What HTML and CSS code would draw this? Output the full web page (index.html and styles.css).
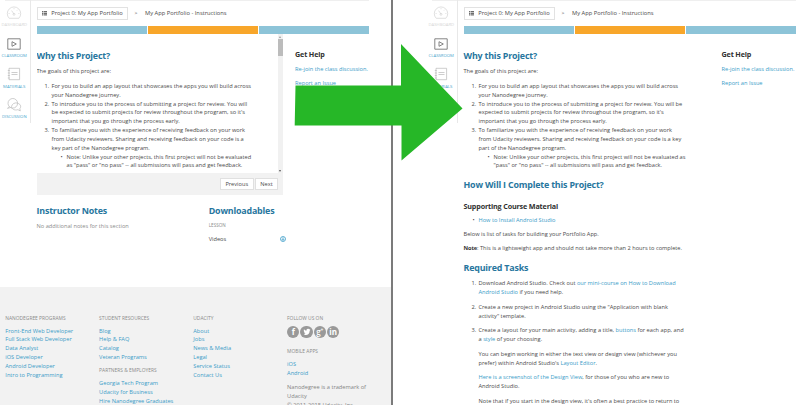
FILE: index.html
```html
<!DOCTYPE html>
<html lang="en">
<head>
<meta charset="utf-8">
<title>My App Portfolio - Instructions</title>
<link rel="stylesheet" href="styles.css">
</head>
<body>
<svg width="0" height="0" class="defs" aria-hidden="true">
  <symbol id="gauge" viewBox="0 0 16 14"><path d="M3.2 12.3A6.7 6.7 0 1 1 12.8 12.3Z"/><path d="M8 8L5.6 4.6M2.6 7.5h1M12.4 7.5h1M8 2.2v1M11.7 3.8l-.7.7"/><circle cx="8" cy="8.3" r="1"/></symbol>
  <symbol id="play" viewBox="0 0 16 14"><path d="M1.8 1.8h12.4v10.4H1.8z"/><path d="M6 4.7v4.6L10.3 7z"/></symbol>
  <symbol id="book" viewBox="0 0 16 14"><path d="M3 1.3h10.6v11.4H3zM5.500 5.500h6M5.500 7.500h6M1.8 3.5h2M1.8 6h2M1.8 8.5h2M1.8 11h2"/></symbol>
  <symbol id="chat" viewBox="0 0 16 14"><circle cx="6.800" cy="5.300" r="4.800"/><path d="M3.2 8.500L1.5 10.4 4.500 9.500"/><path d="M11.500 5.200c4 1 3.500 4.600 2.300 5.400l.5 2.300-2.400-1.200c-3.500 1-6.200-.7-6.400-3 .5-3 3-4.200 6-3.700"/></symbol>
  <symbol id="list" viewBox="0 0 5 5"><path d="M0 .7h1M1.500 .7h3.500M0 2.300h1M1.500 2.300h3.500M0 3.900h1M1.500 3.900h3.500"/></symbol>
</svg>
<div class="screen">
  <section class="pane before">
    <div class="top">
      <nav class="side">
        <a class="dim"><svg><use href="#gauge"/></svg>DASHBOARD</a>
        <a class="on"><svg><use href="#play"/></svg>CLASSROOM</a>
        <a><svg><use href="#book"/></svg>MATERIALS</a>
        <a><svg><use href="#chat"/></svg>DISCUSSION</a>
      </nav>
      <main>
        <div class="crumbs"><span class="crumb"><svg><use href="#list"/></svg>Project 0: My App Portfolio</span><i>&gt;</i><span>My App Portfolio - Instructions</span></div>
        <div class="progress"><b></b><b class="now"></b><b></b></div>
        <div class="cols">
          <div class="lesson">
            <div class="scroll">
              <article>
                <h2>Why this Project?</h2>
                <p>The goals of this project are:</p>
                <ol>
                  <li>For you to build an app layout that showcases the apps you will build across<br>your Nanodegree journey.</li>
                  <li>To introduce you to the process of submitting a project for review. You will<br>be expected to submit projects for review throughout the program, so it's<br>important that you go through the process early.</li>
                  <li>To familiarize you with the experience of receiving feedback on your work<br>from Udacity reviewers. Sharing and receiving feedback on your code is a<br>key part of the Nanodegree program.
                    <ul><li>Note: Unlike your other projects, this first project will not be evaluated<br>as "pass" or "no pass" -- all submissions will pass and get feedback.</li></ul>
                  </li>
                </ol>
              </article>
              <div class="bar"><s class="up"></s><b></b><s class="down"></s></div>
            </div>
            <div class="pager"><button>Previous</button><button>Next</button></div>
          </div>
          <aside><h3>Get Help</h3><a>Re-join the class discussion.</a><a>Report an Issue</a></aside>
        </div>
        <div class="extras">
          <div class="notes"><h2>Instructor Notes</h2><p>No additional notes for this section</p></div>
          <div class="downloads"><h2>Downloadables</h2><h6>LESSON</h6><p>Videos <svg viewBox="0 0 6 6"><circle cx="3" cy="3" r="2.500"/><path d="M3 1.300v3M1.900 3.200L3 4.400l1.100-1.200"/></svg></p></div>
        </div>
      </main>
    </div>
    <footer>
      <div><h6>NANODEGREE PROGRAMS</h6><a>Front-End Web Developer</a><a>Full Stack Web Developer</a><a>Data Analyst</a><a>iOS Developer</a><a>Android Developer</a><a>Intro to Programming</a></div>
      <div><h6>STUDENT RESOURCES</h6><a>Blog</a><a>Help &amp; FAQ</a><a>Catalog</a><a>Veteran Programs</a><h6 class="next">PARTNERS &amp; EMPLOYERS</h6><a>Georgia Tech Program</a><a>Udacity for Business</a><a>Hire Nanodegree Graduates</a></div>
      <div><h6>UDACITY</h6><a>About</a><a>Jobs</a><a>News &amp; Media</a><a>Legal</a><a>Service Status</a><a>Contact Us</a></div>
      <div><h6>FOLLOW US ON</h6>
        <div class="social"><span>f</span><span><svg viewBox="0 0 12 12"><path d="M2.700 8.500c2.800 1.500 6-.1 6-3.800l.8-1-.9.100.5-.9-1 .4c-1.300-1.100-2.900-.1-2.500 1.300C4.300 4.500 3.600 3.900 3 3.200c-.5.900-.2 1.700.4 2.200L2.800 5.200c.1.900.6 1.400 1.200 1.600l-.6.100c.3.600.8.800 1.300.9-.6.500-1.200.700-2 .700z"/></svg></span><span class="g">g<sup>+</sup></span><span>in</span></div>
        <h6 class="apps">MOBILE APPS</h6><a>iOS</a><a>Android</a><p>Nanodegree is a trademark of<br>Udacity<br>© 2011-2015 Udacity, Inc.</p></div>
    </footer>
  </section>
  <section class="pane after">
    <div class="top">
      <nav class="side">
        <a class="dim"><svg><use href="#gauge"/></svg>DASHBOARD</a>
        <a class="on"><svg><use href="#play"/></svg>CLASSROOM</a>
        <a><svg><use href="#book"/></svg>MATERIALS</a>
      </nav>
      <main>
        <div class="crumbs"><span class="crumb"><svg><use href="#list"/></svg>Project 0: My App Portfolio</span><i>&gt;</i><span>My App Portfolio - Instructions</span></div>
        <div class="progress"><b></b><b class="now"></b><b></b></div>
        <div class="cols">
          <article>
            <h2>Why this Project?</h2>
            <p>The goals of this project are:</p>
            <ol>
              <li>For you to build an app layout that showcases the apps you will build across<br>your Nanodegree journey.</li>
              <li>To introduce you to the process of submitting a project for review. You will be<br>expected to submit projects for review throughout the program, so it's<br>important that you go through the process early.</li>
              <li>To familiarize you with the experience of receiving feedback on your work<br>from Udacity reviewers. Sharing and receiving feedback on your code is a key<br>part of the Nanodegree program.
                <ul><li>Note: Unlike your other projects, this first project will not be evaluated as<br>"pass" or "no pass" -- all submissions will pass and get feedback.</li></ul>
              </li>
            </ol>
            <h2 class="how">How Will I Complete this Project?</h2>
            <h3>Supporting Course Material</h3>
            <ul class="links"><li><a>How to Install Android Studio</a></li></ul>
            <p class="below">Below is list of tasks for building your Portfolio App.</p>
            <p><strong>Note</strong>: This is a lightweight app and should not take more than 2 hours to complete.</p>
            <h2 class="required">Required Tasks</h2>
            <ol class="tasks">
              <li>Download Android Studio. Check out <a>our mini-course on How to Download<br>Android Studio</a> if you need help.</li>
              <li>Create a new project in Android Studio using the "Application with blank<br>activity" template.</li>
              <li>Create a layout for your main activity, adding a title, <a>buttons</a> for each app, and<br>a <a>style</a> of your choosing.
                <p>You can begin working in either the text view or design view (whichever you<br>prefer) within Android Studio's <a>Layout Editor</a>.</p>
                <p><a>Here is a screenshot of the Design View</a>, for those of you who are new to<br>Android Studio.</p>
                <p>Note that if you start in the design view, it's often a best practice to return to</p>
              </li>
            </ol>
          </article>
          <aside><h3>Get Help</h3><a>Re-join the class discussion.</a><a>Report an Issue</a></aside>
        </div>
      </main>
    </div>
  </section>
  <svg class="arrow" viewBox="0 0 170 118"><path d="M1.500 41.500H107V0L168.500 64.500 107.500 116.500V81.500H.700z"/></svg>
</div>
</body>
</html>
```
FILE: styles.css
```css
* { box-sizing: border-box; }
body { margin: 0; background: #fff; color: #4a4a4a; font: 5.67px/8.83px "Open Sans", sans-serif; white-space: nowrap; overflow: hidden; }
h2, h3, h6, p, ol, ul { margin: 0; padding: 0; font-weight: 400; }
ol, ul { list-style: none; }
svg { fill: none; stroke: currentColor; }
a { color: #3a9cc8; }
.defs { position: absolute; }
.screen { position: relative; display: flex; width: 798px; height: 405px; overflow: hidden; }
.pane { height: 405px; overflow: hidden; }
.before { width: 393px; border-right: 2px solid #7b7b7b; display: flex; flex-direction: column; }
.after { width: 405px; padding-left: 34px; }
.top { display: flex; flex: 1; }
.pane .top { background: linear-gradient(#efefef, #efefef) 5px 0 / 364px 1px no-repeat; }

.side { width: 30.500px; height: 123px; padding-top: 6px; border-right: 1px solid #e8e8e8; flex: none; }
.side a { display: flex; flex-direction: column; align-items: center; height: 30.700px; margin-right: 1px; font-size: 4.250px; line-height: 6px; color: #4ba6cd; }
.side svg { width: 16px; height: 14px; margin-bottom: 1.200px; color: #b9b9b9; stroke-width: .7; flex: none; }
.side .dim { color: #d6d6d6; }
.side .dim svg { color: #d2d2d2; }
.side .on svg { color: #777; stroke-width: .9; }

main { width: 333px; margin-left: 6px; padding-top: 7px; flex: none; }
.crumbs { display: flex; align-items: center; height: 12.500px; font-size: 5.770px; }
.crumb { display: flex; align-items: center; width: 91px; height: 12.500px; padding-left: 4px; border: 1px solid #e2e2e2; }
.crumb svg { width: 5px; height: 5px; margin-right: 4.700px; stroke-width: 1; }
.crumbs i { width: 17.500px; padding-left: 7px; font-style: normal; font-size: 5px; }
.progress { display: grid; grid-template-columns: repeat(3, 1fr); gap: .7px; height: 8px; margin-top: 6.500px; }
.progress b { background: #8dc4d8; }
.progress .now { background: #f8a62a; }

.cols { display: flex; }
article { width: 241px; padding-top: 15.600px; }
h2 { font-size: 8.900px; line-height: 12px; font-weight: 700; letter-spacing: -.18px; color: #27769e; }
h3 { font-size: 7.180px; line-height: 10px; font-weight: 700; letter-spacing: -.15px; color: #303030; }
h2 + p { margin-top: 5.300px; }
article > ol { margin-top: 6.200px; padding-left: 15px; counter-reset: item; }
ol > li { counter-increment: item; }
ol > li::before { content: counter(item) "."; display: inline-block; width: 7px; margin-left: -7px; }
ul > li::before { content: "•"; display: inline-block; width: 6px; margin-left: -6px; }
li ul { padding-left: 15px; }
.how { margin-top: 8.600px; }
.how + h3 { margin-top: 10.200px; }
.links { margin-top: 5px; padding-left: 15px; }
.below { margin: 5px 0 5.500px; }
.required { margin-top: 9.500px; }
article > .tasks { margin-top: 5px; }
.tasks > li, .tasks p { margin-bottom: 5.850px; }
.tasks p { margin-top: 5.850px; }
strong { font-weight: 700; letter-spacing: -.1px; color: #333; }

.after aside { margin-left: 17px; }
.before aside { margin-left: 12px; }
aside { padding-top: 15px; width: 74px; }
aside a { display: block; margin-top: 5.800px; }

.lesson { width: 246.500px; }
.scroll { display: flex; height: 139px; overflow: hidden; }
.bar { width: 5.500px; background: #f1f1f1; display: flex; flex-direction: column; align-items: center; }
.bar b { width: 4.500px; height: 17px; background: #bcbcbc; }
.up { margin: 2px 0 1px; border: solid transparent; border-width: 0 1.500px 2px; border-bottom-color: #999; }
.down { margin: auto 0 1.500px; border: solid transparent; border-width: 2px 1.500px 0; border-top-color: #555; }
.pager { display: flex; justify-content: flex-end; gap: 1.500px; height: 22px; padding: 4.500px 5px; background: #f2f2f2; }
button { height: 12.500px; width: 23px; padding: 0; border: 1px solid #e0e0e0; background: #fff; color: #4a4a4a; font: inherit; line-height: 10px; }
button:first-child { width: 33.500px; }

.extras { display: flex; margin-top: 9.500px; }
.notes { width: 172.200px; color: #8b8b8b; }
.downloads { width: 77.500px; }
h6 { font-size: 4.900px; line-height: 8.830px; color: #8a8a8a; }
.downloads h6 { font-size: 4.600px; margin: 4.400px 0 5px; }
.downloads p { display: flex; justify-content: space-between; align-items: center; }
.downloads svg { width: 6px; height: 6px; color: #3a9cc8; stroke-width: .8; }

footer { display: grid; grid-template-columns: 93.800px 94.200px 93.800px 1fr; height: 118px; flex: none; padding: 26.700px 0 0 5.300px; background: #f2f2f2; }
footer a { display: block; }
footer h6 { margin-bottom: 4px; }
footer h6.next { margin: 4.600px 0 4px; }
footer p { margin-top: 5.600px; color: #848484; }
.social { display: flex; gap: 1px; margin-top: -.700px; }
.social span { display: flex; align-items: center; justify-content: center; width: 12.300px; height: 12.300px; border-radius: 50%; background: #999; color: #fff; font-size: 8px; font-weight: 700; line-height: 10px; }
.social svg { width: 12px; height: 12px; fill: #fff; stroke: none; }
.social .g { font-weight: 600; }
.social sup { font-size: 5px; line-height: 5px; margin-top: -3px; }
footer h6.apps { margin: 9.300px 0 3.700px; }

.arrow { position: absolute; left: 294px; top: 44px; width: 170px; height: 118px; fill: #26b727; stroke: none; }
```
